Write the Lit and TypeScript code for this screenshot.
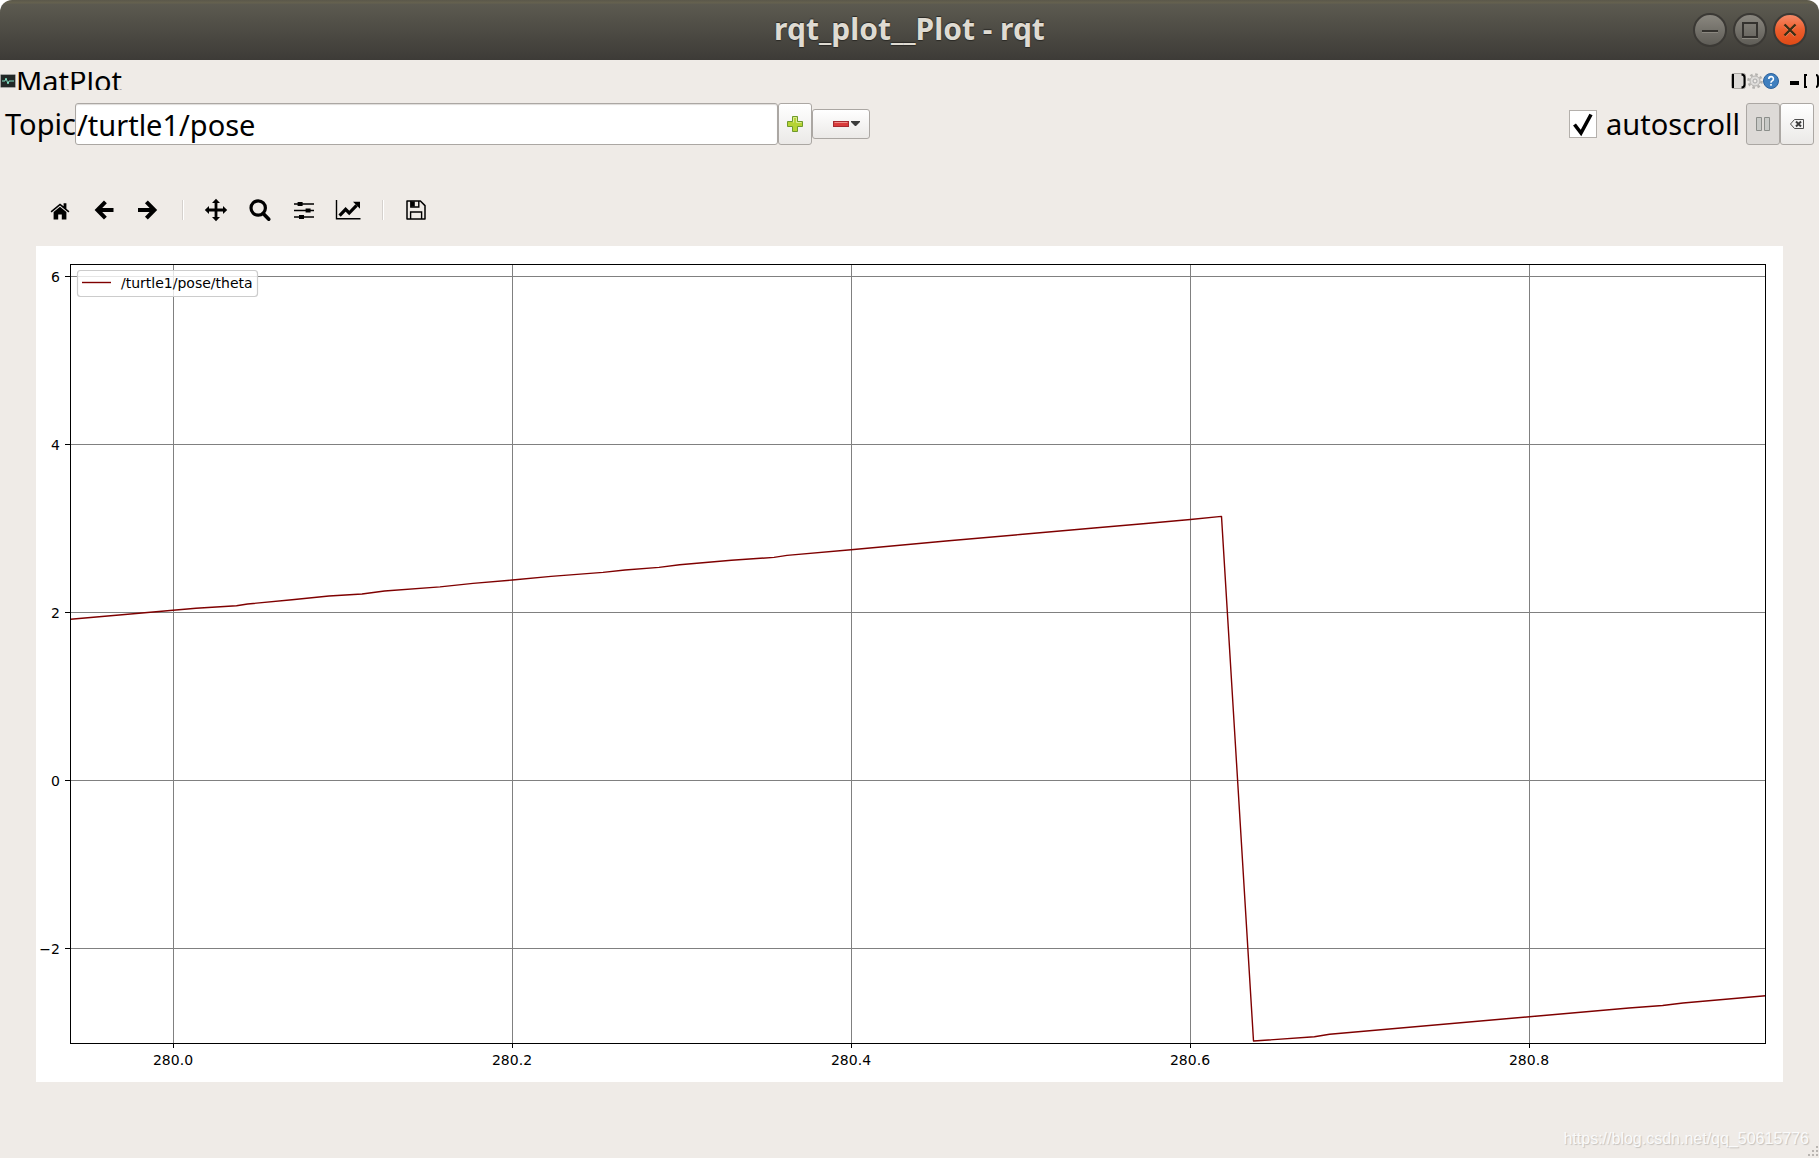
import { LitElement, html, svg, css } from "lit";
import { customElement, state } from "lit/decorators.js";

/* Figure coordinates: 1747 x 836 canvas, axes box from (34,18) to (1729,797). */
const AXES = { left: 34, right: 1729, top: 18, bottom: 797 };

const X_TICKS = [
  { at: 137, label: "280.0" },
  { at: 476, label: "280.2" },
  { at: 815, label: "280.4" },
  { at: 1154, label: "280.6" },
  { at: 1493, label: "280.8" },
];

const Y_TICKS = [
  { at: 30, label: "6" },
  { at: 198, label: "4" },
  { at: 366, label: "2" },
  { at: 534, label: "0" },
  { at: 702, label: "−2" },
];

const THETA: number[][] = [
  [34.5, 373.3], [86, 368.8], [137, 364.2], [160, 362.3], [200.5, 359.7], [211.6, 358],
  [256, 353.8], [293, 350], [326, 348], [348.5, 345], [404, 340.9], [437, 337.4],
  [476.4, 334], [515, 330.4], [567, 326.4], [589, 324], [623, 321.4],
  [643.6, 318.7], [695.4, 314.2], [738, 311.4], [751, 309.4], [815, 303.7], [910, 295],
  [984, 288.5], [1058, 282], [1110, 277.5], [1154.4, 273.5], [1185.5, 270.4],
  [1217.5, 795], [1278.4, 790.7], [1293.6, 788.3], [1493.4, 770.7], [1593, 762],
  [1626.6, 759.5], [1647, 757], [1729.5, 749.7],
];

@customElement("plot-figure")
class PlotFigure extends LitElement {
  static styles = css`
    :host { display: block; background: #fff; }
    .canvas { display: block; width: 100%; height: auto; }
    .canvas text { font: 14px "DejaVu Sans", sans-serif; fill: #000; }
    .grid { stroke: #808080; stroke-width: 1; }
    .tick, .frame { stroke: #000; stroke-width: 1; fill: none; }
    .series { stroke: #7f0000; stroke-width: 1.4; fill: none; stroke-linejoin: round; }
    .legend { fill: #fff; fill-opacity: 0.8; stroke: #ccc; stroke-width: 1.2; }
  `;

  render() {
    const a = AXES;
    return html`
      <svg class="canvas" viewBox="0 0 1747 836" role="img" aria-label="/turtle1/pose/theta">
        ${X_TICKS.map((t) => svg`
          <path class="grid" d="M${t.at + 0.5} ${a.top}V${a.bottom}" />
          <path class="tick" d="M${t.at + 0.5} ${a.bottom}v5" />
          <text x=${t.at} y="819" text-anchor="middle">${t.label}</text>`)}
        ${Y_TICKS.map((t) => svg`
          <path class="grid" d="M${a.left} ${t.at + 0.5}H${a.right}" />
          <path class="tick" d="M${a.left} ${t.at + 0.5}h-5" />
          <text x="24" y=${t.at + 6} text-anchor="end">${t.label}</text>`)}
        <polyline class="series" points=${THETA.map((p) => p.join(",")).join(" ")} />
        <rect class="frame" x=${a.left + 0.5} y=${a.top + 0.5}
          width=${a.right - a.left} height=${a.bottom - a.top} />
        <rect class="legend" x="41.5" y="24.5" width="180" height="26" rx="3" />
        <path class="series" d="M46 36.5h29" />
        <text x="85" y="42">/turtle1/pose/theta</text>
      </svg>`;
  }
}

const home = svg`<path d="M10 3.4 .6 11.2l1 1.2L10 5.4l8.400 7 1-1.2-3-2.4V3.2h-2.8v3z"/><path d="M10 6.800 3.600 12V19.400h4.600v-5h3.600v5h4.600V12z"/>`;
const back = svg`<path d="M19.500 10H4.500M11.400 1.800 3.400 10l8 8.2" fill="none" stroke="#000" stroke-width="4"/>`;
const forward = svg`<path d="M0 10h15.500M8.400 1.800l8 8.2-8 8.2" fill="none" stroke="#000" stroke-width="4"/>`;
const pan = svg`<path d="m10-1.2 4 4.2h-2.6v5.6H17V6l4.2 4-4.2 4v-2.6h-5.6V17H14l-4 4.2L6 17h2.6v-5.6H3V14l-4.2-4L3 6v2.6h5.6V3H6z"/>`;
const zoomIcon = svg`<circle cx="8.2" cy="8" r="7.2" fill="none" stroke="#000" stroke-width="3.2"/><path d="m13.2 13.4 5.600 5.800" stroke="#000" stroke-width="3.6" stroke-linecap="round"/>`;
const sliders = svg`<path d="M0 4h20M0 10.5h20M0 17h20" stroke="#000" stroke-width="1.4"/><path d="M3.6 2h5v4h-5zM11.6 8.5h5v4h-5zM5 15h5v4H5z"/>`;
const curve = svg`<path d="M-1.5 0v18.8h24" fill="none" stroke="#000" stroke-width="1.4"/><path d="m1.6 15.6 6-6.2 3.6 3.6 7.4-7.6" fill="none" stroke="#000" stroke-width="3.2"/><path d="M15 1.8h7v7z"/>`;
const save = svg`<path d="M1 1h13.4L19 5.6V19H1z" fill="none" stroke="#000" stroke-width="1.5" stroke-linejoin="round"/><path d="M4.8 1v6h8V1M4.6 19v-7h11v7" fill="none" stroke="#000" stroke-width="1.4"/><path d="M5 1.4h3.8v5.2H5z"/>`;

const TOOLS = [
  [
    { name: "Home", icon: home },
    { name: "Back", icon: back },
    { name: "Forward", icon: forward },
  ],
  [
    { name: "Pan", icon: pan },
    { name: "Zoom", icon: zoomIcon },
    { name: "Subplots", icon: sliders },
    { name: "Customize", icon: curve },
  ],
  [{ name: "Save", icon: save }],
];

@customElement("app-root")
class AppRoot extends LitElement {
  @state() private topic = "/turtle1/pose";
  @state() private autoscroll = true;

  static styles = css`
    :host {
      display: block;
      font: 29px/34px "Noto Sans", sans-serif;
      color: #000;
    }
    * { box-sizing: border-box; }
    button { font: inherit; color: inherit; margin: 0; padding: 0; border: 0; background: none; }
    svg { display: block; overflow: visible; }
    .window { display: flex; flex-direction: column; min-height: 100vh; background: #efebe7; }

    .titlebar-back { background: #fff; }
    .titlebar {
      display: grid;
      grid-template-columns: 1fr auto 1fr;
      align-items: center;
      height: 60px;
      padding: 0 12px;
      border-radius: 12px 12px 0 0;
      background: linear-gradient(#5b584b 0, #66624f 3px, #5c5a50 4px, #3d3b37 100%);
    }
    .title {
      grid-column: 2;
      margin: 0;
      padding-bottom: 2px;
      font-size: 30px;
      font-weight: 700;
      color: #dfdbd2;
      text-shadow: 0 -1px 1px #2a2925, 0 1px 1px #2a2925;
    }
    .controls { display: flex; justify-content: flex-end; gap: 6px; }
    .control {
      width: 34px;
      height: 34px;
      border: 2px solid #3b3935;
      border-radius: 50%;
      background: linear-gradient(#8a877f, #5f5d57);
    }
    .control.close { background: linear-gradient(#f58a68, #ec5d2c 50%, #df4a16); }

    .dock { display: flex; align-items: center; height: 18px; margin-top: 12px; overflow: hidden; }
    .dock-title { flex: 1; margin: 0; font-size: 29px; font-weight: 400; line-height: 18px; }
    .dock-tools { display: flex; }
    .dock-tools button { width: 16px; height: 16px; }
    .dock-tools .gap { margin-left: 8px; }

    .bar { display: flex; align-items: center; margin-top: 13px; padding: 0 5px; }
    .topic-label { width: 70px; }
    .topic {
      flex: 1 1 0;
      min-width: 0;
      height: 42px;
      padding: 0 1px;
      border: 1px solid #aba7a3;
      border-radius: 3px;
      background: #fff;
      box-shadow: inset 0 1px 1px #dedcda;
      font: inherit;
      color: inherit;
      outline: 0;
    }
    .spacer { flex: 1 1 0; }
    .push {
      display: grid;
      place-items: center;
      width: 34px;
      height: 42px;
      border: 1px solid #aba7a3;
      border-radius: 3px;
      background: linear-gradient(#fff, #ebe9e7);
    }
    .push.pressed { background: #dddad7; }
    .push.menu { display: flex; align-items: center; justify-content: flex-end; gap: 2px; width: 58px; height: 30px; padding-right: 9px; }
    .auto { display: flex; align-items: center; gap: 9px; margin-right: 6px; }
    .check {
      appearance: none;
      display: grid;
      place-items: center;
      width: 28px;
      height: 28px;
      margin: 0;
      border: 1px solid #b4b0ac;
      background: #fff;
    }
    .check-wrap { display: grid; }
    .check-wrap > * { grid-area: 1 / 1; }
    .check-wrap svg { pointer-events: none; }

    .toolbar { display: flex; align-items: center; margin: 53px 36px 24px; padding-left: 8px; }
    .group { display: flex; gap: 12px; }
    .tool { display: grid; place-items: center; width: 32px; height: 24px; }
    .separator { width: 2px; height: 20px; margin: 0 16px 0 18px; background: linear-gradient(90deg, #d5d1cd 50%, #fff 50%); }

    .figure { margin: 0 36px; }

    .footer { display: flex; flex: 1; align-items: flex-end; justify-content: flex-end; min-height: 76px; }
    .watermark { margin-right: -2px; padding-bottom: 8px; font: 16px/22px "Liberation Sans", sans-serif; color: #fafafa; text-shadow: 1px 1px 1px #c4c0bc; }
  `;

  render() {
    return html`
      <div class="window">
        <div class="titlebar-back">
          <header class="titlebar">
            <h1 class="title">rqt_plot__Plot - rqt</h1>
            <div class="controls">
              <button class="control" aria-label="Minimize">
                <svg width="30" height="30"><path d="M7 16h16" stroke="#34322e" stroke-width="2"/><path d="M7 17.5h16" stroke="#8b8880"/></svg>
              </button>
              <button class="control" aria-label="Maximize">
                <svg width="30" height="30"><path d="M7 23.5h16" stroke="#8b8880"/><path d="M8 8h14v14H8z" fill="none" stroke="#34322e" stroke-width="2"/></svg>
              </button>
              <button class="control close" aria-label="Close">
                <svg width="30" height="30"><path d="m10 11 10 10m0-10L10 21" stroke="#f79472" stroke-width="2"/><path d="m9.500 9.500 11 11m0-11-11 11" stroke="#3a2e14" stroke-width="2.400"/></svg>
              </button>
            </div>
          </header>
        </div>

        <section class="dock">
          <svg width="16" height="14" aria-hidden="true">
            <rect x="0.5" y="0.5" width="15" height="13" rx="1" fill="#222827" stroke="#a5a5a5"/>
            <path d="M2 7h3l1-3 2 6 1-3h5" fill="none" stroke="#7fe0c4"/>
          </svg>
          <h2 class="dock-title">MatPlot</h2>
          <div class="dock-tools">
            <button aria-label="Float">
              <svg width="16" height="16"><rect x="0.5" y="0.5" width="14" height="15" rx="2" fill="#dddad7" stroke="#aba7a3"/><path d="M2 1v14" stroke="#000" stroke-width="2"/><path d="M10.500 1.500q3 0 3 3v7q0 3-3 3" fill="none" stroke="#000" stroke-width="2"/></svg>
            </button>
            <button aria-label="Settings">
              <svg width="16" height="16"><circle cx="8" cy="8" r="6.600" fill="none" stroke="#b4b2af" stroke-width="2.400" stroke-dasharray="2.600 2.580"/><circle cx="8" cy="8" r="5" fill="#dfdddb" stroke="#b4b2af"/><circle cx="8" cy="8" r="2" fill="#efebe7" stroke="#aaa"/></svg>
            </button>
            <button aria-label="Help">
              <svg width="16" height="16"><circle cx="8" cy="8" r="7.500" fill="#3f7fbf" stroke="#2c619c"/><path d="M5.800 6q0-2.400 2.300-2.400T10.400 6q0 1.200-1.200 1.900T8 9.800M8 11v1.800" fill="none" stroke="#fff" stroke-width="1.600"/></svg>
            </button>
            <button class="gap" aria-label="Minimize dock">
              <svg width="16" height="16"><path d="M3 10h9" stroke="#000" stroke-width="4"/></svg>
            </button>
            <button aria-label="Close dock">
              <svg width="16" height="16"><path d="M4 2H2v12h2M13 2q2 0 2 3v6q0 3-2 3" fill="none" stroke="#000" stroke-width="2"/></svg>
            </button>
          </div>
        </section>

        <section class="bar">
          <label class="topic-label" for="topic">Topic</label>
          <input class="topic" id="topic" type="text" .value=${this.topic}
            @input=${(e: Event) => (this.topic = (e.target as HTMLInputElement).value)} />
          <button class="push" aria-label="Add topic">
            <svg width="16" height="16"><path d="M5.500.5h5v5h5v5h-5v5h-5v-5h-5v-5h5z" fill="#b5d334" stroke="#6f9a2c"/><path d="M6.500 6.500v-5h3v5h5" fill="none" stroke="#dcec93"/></svg>
          </button>
          <button class="push menu" aria-label="Remove topic">
            <svg width="16" height="6"><rect x="0.5" y="0.5" width="15" height="5" fill="#d93b3b" stroke="#a62a30"/><path d="M1.500 1.500h13" stroke="#ee8f8a"/></svg>
            <svg width="9" height="6"><path d="M0 0h9v1L5 5H4L0 1z" fill="#3c3c3c"/></svg>
          </button>
          <div class="spacer"></div>
          <div class="auto">
            <div class="check-wrap">
              <input class="check" id="auto" type="checkbox" .checked=${this.autoscroll}
                @change=${(e: Event) => (this.autoscroll = (e.target as HTMLInputElement).checked)} />
              ${this.autoscroll
                ? html`<svg width="28" height="28"><path d="m5.500 14.500 6.500 8.500L22 4.500" fill="none" stroke="#000" stroke-width="3.600"/></svg>`
                : null}
            </div>
            <label for="auto">autoscroll</label>
          </div>
          <button class="push pressed" aria-label="Pause">
            <svg width="14" height="14"><path d="M.5.5h5v13h-5zM8.500.5h5v13h-5z" fill="#c8cac7" stroke="#8b8e8a"/></svg>
          </button>
          <button class="push" aria-label="Clear plot">
            <svg width="14" height="10"><path d="M4.500.5h9v9h-9L.5 5z" fill="#f4f4f4" stroke="#4f4f4f"/><path d="m6 2.500 5 5m0-5-5 5" stroke="#3c3c3c" stroke-width="2"/></svg>
          </button>
        </section>

        <nav class="toolbar" aria-label="Plot tools">
          ${TOOLS.map((group, i) => html`
            ${i ? html`<span class="separator"></span>` : null}
            <div class="group">
              ${group.map((t) => html`
                <button class="tool" aria-label=${t.name}>
                  <svg width="20" height="20">${t.icon}</svg>
                </button>`)}
            </div>`)}
        </nav>

        <plot-figure class="figure"></plot-figure>

        <footer class="footer">
          <span class="watermark">https://blog.csdn.net/qq_50615776</span>
          <svg width="12" height="12" aria-hidden="true">
            <path d="M9 1h2M5 5h2M9 5h2M1 9h2M5 9h2M9 9h2" stroke="#b9b5b1" stroke-width="2"/>
          </svg>
        </footer>
      </div>`;
  }
}
